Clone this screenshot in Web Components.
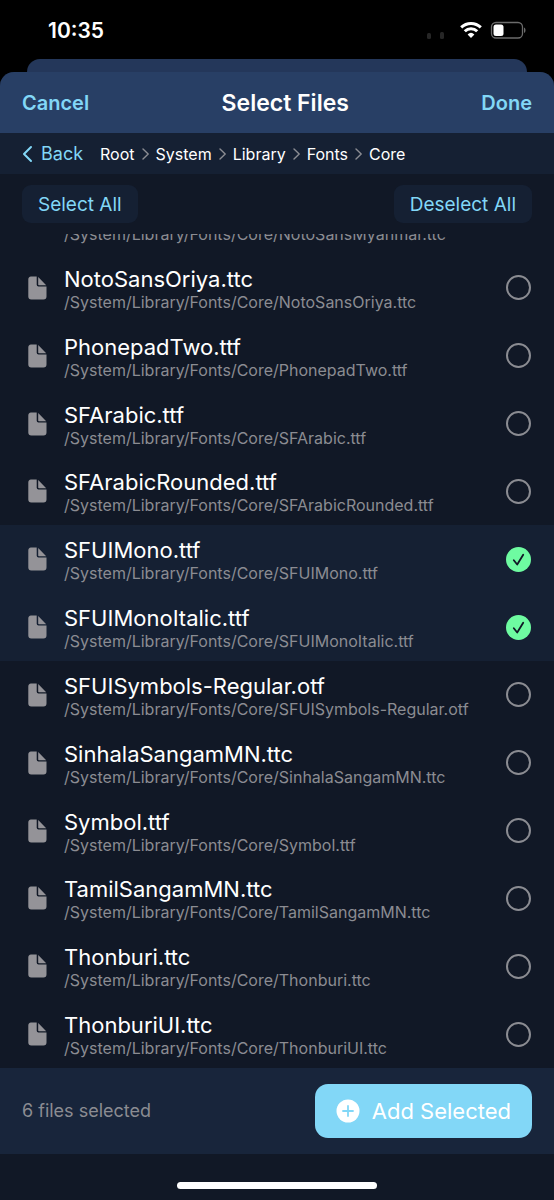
<!DOCTYPE html>
<html lang="en">
<head>
<meta charset="utf-8">
<meta name="viewport" content="width=device-width, initial-scale=1">
<title>Select Files</title>
<style>
  html, body { margin: 0; }
  body {
    background: #000;
    color: #fff;
    font-family: Inter, "Liberation Sans", sans-serif;
    --accent: #82d7f7;
    --muted: #8b8c92;
    --base: #111826;
    --raised: #152033;
    --footer: #18253b;
    --header: #283f65;
    --ok: #6efba1;
  }
</style>
</head>
<body>
<file-picker>
  <status-bar slot="status">10:35</status-bar>
  <sheet-header slot="header">Select Files</sheet-header>
  <path-bar slot="path" segments="Root,System,Library,Fonts,Core"></path-bar>
  <select-tools slot="tools"></select-tools>
  <file-row clipped name="NotoSansMyanmar.ttc"></file-row>
  <file-row name="NotoSansOriya.ttc"></file-row>
  <file-row name="PhonepadTwo.ttf"></file-row>
  <file-row name="SFArabic.ttf"></file-row>
  <file-row name="SFArabicRounded.ttf"></file-row>
  <file-row name="SFUIMono.ttf" checked></file-row>
  <file-row name="SFUIMonoItalic.ttf" checked></file-row>
  <file-row name="SFUISymbols-Regular.otf"></file-row>
  <file-row name="SinhalaSangamMN.ttc"></file-row>
  <file-row name="Symbol.ttf"></file-row>
  <file-row name="TamilSangamMN.ttc"></file-row>
  <file-row name="Thonburi.ttc"></file-row>
  <file-row name="ThonburiUI.ttc"></file-row>
  <selection-footer slot="footer">6 files selected</selection-footer>
</file-picker>

<script>
  const BUTTON = `
    button {
      margin: 0; padding: 0; border: 0; background: none;
      font: inherit; color: var(--accent); cursor: pointer; white-space: nowrap;
    }`;

  class ShadowElement extends HTMLElement {
    constructor() {
      super();
      this.attachShadow({ mode: "open" });
    }
    connectedCallback() {
      this.shadowRoot.innerHTML = this.render();
    }
  }

  customElements.define("file-picker", class extends ShadowElement {
    render() {
      return `
        <style>
          :host { display: flex; flex-direction: column; min-height: 100vh; }
          .behind {
            height: 13px; margin: 0 27px; background: #24375a;
            border-radius: 13px 13px 0 0;
          }
          .sheet {
            flex: 1; display: flex; flex-direction: column; overflow: hidden;
            background: var(--base); border-radius: 14px 14px 0 0;
          }
          .list { flex: 1; display: flex; flex-direction: column; }
          .home { display: flex; justify-content: center; padding: 28px 0 11px; }
          .home i { width: 36%; height: 7px; border-radius: 4px; background: #fff; }
        </style>
        <slot name="status"></slot>
        <div class="behind"></div>
        <main class="sheet">
          <slot name="header"></slot>
          <slot name="path"></slot>
          <slot name="tools"></slot>
          <div class="list"><slot></slot></div>
          <slot name="footer"></slot>
          <div class="home"><i></i></div>
        </main>`;
    }
  });

  customElements.define("status-bar", class extends ShadowElement {
    render() {
      return `
        <style>
          :host {
            display: flex; align-items: center; justify-content: space-between;
            height: 59px; padding: 2px 28px 0 48px; box-sizing: border-box;
            font-size: 21px; font-weight: 600;
          }
          svg { display: block; }
        </style>
        <time><slot></slot></time>
        <svg width="100" height="24" viewBox="0 0 100 24" aria-hidden="true">
          <g fill="#262626">
            <rect x="1" y="14" width="4" height="6" rx="1.5"/>
            <rect x="14" y="13" width="4" height="7" rx="1.5"/>
          </g>
          <g fill="none" stroke="#fff" stroke-width="3">
            <path d="M35.2 8.3a14.2 14.2 0 0 1 19.6 0"/>
            <path d="M38.8 12.3a8.8 8.8 0 0 1 12.4 0"/>
          </g>
          <path fill="#fff" d="M41.6 15.4a5 5 0 0 1 6.8 0L45 19z"/>
          <rect x="65.5" y="3.5" width="31" height="15.500" rx="4.500" fill="none" stroke="#6b6b6b" stroke-width="1.300"/>
          <rect x="67.500" y="5.500" width="10" height="11.500" rx="2.500" fill="#fff"/>
          <path fill="#6b6b6b" d="M98 8.500c2 .8 2 4.700 0 5.500z"/>
        </svg>`;
    }
  });

  customElements.define("sheet-header", class extends ShadowElement {
    render() {
      return `
        <style>${BUTTON}
          :host {
            display: flex; align-items: center; justify-content: space-between;
            height: 61px; padding: 0 22px; background: var(--header);
          }
          h1 { margin: 0; font-size: 23px; line-height: 28px; font-weight: 600; }
          button { font-size: 20px; line-height: 28px; font-weight: 600; }
        </style>
        <button type="button">Cancel</button>
        <h1><slot></slot></h1>
        <button type="button">Done</button>`;
    }
  });

  customElements.define("path-bar", class extends ShadowElement {
    render() {
      const crumbs = this.getAttribute("segments").split(",")
        .map((name) => `<li><a href="#${name}">${name}</a></li>`)
        .join(`<li aria-hidden="true"><svg width="7" height="12" viewBox="0 0 7 12"><path d="M1 1l5.200 5L1 11"/></svg></li>`);
      return `
        <style>${BUTTON}
          :host {
            display: flex; align-items: center; gap: 17px;
            height: 41px; padding: 0 22px; background: var(--raised);
          }
          button { display: flex; align-items: center; gap: 8px; font-size: 18px; line-height: 24px; }
          ol {
            display: flex; align-items: center; gap: 7px;
            margin: 0; padding: 0; list-style: none; font-size: 16px; line-height: 24px;
          }
          a { color: #fff; text-decoration: none; }
          svg { display: block; fill: none; stroke: var(--muted); stroke-width: 1.400; stroke-linecap: round; stroke-linejoin: round; }
          button svg { stroke: var(--accent); stroke-width: 2; }
        </style>
        <button type="button"><svg width="11" height="18" viewBox="0 0 11 18" aria-hidden="true"><path d="M9 2L2 9l7 7"/></svg>Back</button>
        <nav aria-label="Folder path"><ol>${crumbs}</ol></nav>`;
    }
  });

  customElements.define("select-tools", class extends ShadowElement {
    render() {
      return `
        <style>${BUTTON}
          :host { display: flex; justify-content: space-between; padding: 11px 22px; }
          button {
            height: 38px; padding: 0 16px; border-radius: 9px;
            background: var(--raised); font-size: 19px;
          }
        </style>
        <button type="button">Select All</button>
        <button type="button">Deselect All</button>`;
    }
  });

  customElements.define("file-row", class extends ShadowElement {
    render() {
      const name = this.getAttribute("name");
      return `
        <style>
          :host { display: flex; flex: 1 0 auto; }
          :host([clipped]) { flex: none; height: 20px; overflow: hidden; align-items: flex-end; }
          label {
            flex: 1; display: flex; align-items: center; box-sizing: border-box;
            min-height: 67px; padding: 0 23px 0 28px; cursor: pointer;
          }
          label:has(:checked) { background: var(--raised); }
          .icon { width: 19px; height: 24px; margin-right: 17px; }
          .text { flex: 1; display: flex; flex-direction: column; min-width: 0; padding-top: 1px; }
          .name { font-size: 22px; line-height: 27px; }
          .path { font-size: 16px; line-height: 18px; color: var(--muted); }
          .tick { display: grid; }
          .tick > * { grid-area: 1 / 1; }
          input {
            appearance: none; width: 25px; height: 25px; margin: 0; box-sizing: border-box;
            border: 2px solid var(--muted); border-radius: 50%;
          }
          input:checked { border: 0; background: var(--ok); }
          .tick svg { display: none; pointer-events: none; }
          input:checked + svg { display: block; }
          :host([clipped]) label { min-height: 0; padding-bottom: 11px; }
          :host([clipped]) :is(.icon, .tick, .name) { visibility: hidden; }
        </style>
        <label>
          <svg class="icon" viewBox="0 0 19 24" fill="#949398" aria-hidden="true">
            <path d="M3 .5h5.700v8.200a1.800 1.800 0 0 0 1.800 1.800h8V20.500a3 3 0 0 1-3 3H3.300a3 3 0 0 1-3-3V3.500A3 3 0 0 1 3 .5z"/>
            <path d="M10.200 1l8 8.200h-7.200a.8.8 0 0 1-.8-.8z"/>
          </svg>
          <span class="text">
            <span class="name">${name}</span>
            <span class="path">/System/Library/Fonts/Core/${name}</span>
          </span>
          <span class="tick">
            <input type="checkbox"${this.hasAttribute("checked") ? " checked" : ""}>
            <svg width="25" height="25" viewBox="0 0 25 25" fill="none" stroke="#111826" stroke-width="1.800" stroke-linecap="round" stroke-linejoin="round" aria-hidden="true">
              <path d="M7.800 13.300l3.400 4.200 6-9.700"/>
            </svg>
          </span>
        </label>`;
    }
  });

  customElements.define("selection-footer", class extends ShadowElement {
    render() {
      return `
        <style>${BUTTON}
          :host {
            display: flex; align-items: center; justify-content: space-between;
            padding: 16px 22px; background: var(--footer);
            font-size: 18px; line-height: 24px; color: var(--muted);
          }
          button {
            display: flex; align-items: center; gap: 12px;
            height: 54px; padding: 0 21px; border-radius: 13px;
            background: var(--accent); color: #fff; font-size: 22px;
          }
        </style>
        <span><slot></slot></span>
        <button type="button">
          <svg width="24" height="24" viewBox="0 0 24 24" aria-hidden="true">
            <circle cx="12" cy="12" r="11.500" fill="#fff"/>
            <path d="M12 7v10M7 12h10" stroke="#82d7f7" stroke-width="1.800" stroke-linecap="round"/>
          </svg>
          Add Selected
        </button>`;
    }
  });
</script>
</body>
</html>
